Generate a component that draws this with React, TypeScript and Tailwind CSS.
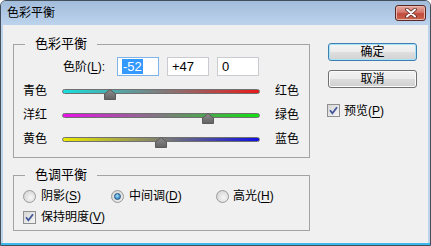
import type { ReactNode } from "react";

const font = "font-['Liberation_Sans','Noto_Sans_CJK_SC',sans-serif]";

function Key({ children }: { children: ReactNode }) {
  return <span className="underline underline-offset-[2px]">{children}</span>;
}

function CheckBox() {
  return (
    <span className="flex justify-center items-center border border-[#8e8f8f] bg-[linear-gradient(135deg,#d6d6d6,#f6f6f6)] w-[13px] h-[13px] shrink-0">
      <svg width="9" height="9" viewBox="0 0 9 9">
        <path d="M1 4.3 L3.4 7.2 L8 1.2" fill="none" stroke="#41579a" strokeWidth="1.8" />
      </svg>
    </span>
  );
}

function Radio({ on }: { on?: boolean }) {
  return (
    <span className="flex justify-center items-center border border-[#9a9a9a] rounded-full bg-[radial-gradient(circle_at_60%_60%,#f6f6f6,#cdcdcd)] w-[13px] h-[13px] shrink-0">
      {on && (
        <span className="border border-[#1d4f7c] rounded-full bg-[radial-gradient(circle_at_40%_35%,#9bdcfb,#1b6db2)] w-[7px] h-[7px]" />
      )}
    </span>
  );
}

function Slider({ left, right, grad, value }: { left: string; right: string; grad: string; value: number }) {
  return (
    <div className="flex items-center pl-[9px] h-[24px]">
      <span className="w-[39px]">{left}</span>
      <div className="relative w-[198px] h-[5px]">
        <div className={`border border-[#707070] rounded-full w-full h-full ${grad}`} />
        {/* thumb */}
        <svg
          className="top-0 absolute"
          style={{ left: `calc(${(value + 100) / 2}% - 6px)` }}
          width="12"
          height="11"
          viewBox="0 0 12 11"
        >
          <defs>
            <linearGradient id={`g${left}`} x1="0" y1="0" x2="0" y2="1">
              <stop offset="0" stopColor="#8d8d8d" />
              <stop offset="1" stopColor="#626262" />
            </linearGradient>
          </defs>
          <path d="M6 0.5 L11.5 5 V10.5 H0.5 V5 Z" fill={`url(#g${left})`} stroke="#5b5b5b" />
        </svg>
      </div>
      <span className="ml-[15px]">{right}</span>
    </div>
  );
}

function NumBox({ value, active }: { value: string; active?: boolean }) {
  return (
    <div
      className={`flex items-center bg-white border pl-[4px] w-[42px] h-[19px] text-[13px] ${
        active ? "border-[#7eb4ea]" : "border-[#c9cbd0]"
      }`}
    >
      {active ? <span className="bg-[#3399ff] px-[1px] text-white leading-[15px]">{value}</span> : value}
    </div>
  );
}

export default function App() {
  return (
    <div className={`bg-white w-[431px] h-[246px] text-[12px] text-black ${font}`}>
      <div className="flex flex-col bg-[#bcd3ea] border border-[#434e5b] rounded-t-[6px] w-[431px] h-[246px] overflow-hidden">
        {/* title bar */}
        <div className="flex items-center bg-[linear-gradient(#a2bcdb,#bcd3ec)] pr-[4px] pl-[6px] h-[24px] shrink-0">
          <span className="leading-none">色彩平衡</span>
          <div className="flex justify-center items-center bg-[linear-gradient(#e6aa9f,#d5776b_45%,#c24a3c_55%,#c9664f)] shadow-[inset_0_0_0_1px_#eab7ae] ml-auto border border-[#5a2823] rounded-[3px] w-[31px] h-[16px]">
            <svg width="12" height="10" viewBox="0 0 12 10">
              <path d="M2 1.5 L10 8.5 M10 1.5 L2 8.5" stroke="#5a2b27" strokeWidth="3.6" strokeLinecap="round" />
              <path d="M2 1.5 L10 8.5 M10 1.5 L2 8.5" stroke="#ffffff" strokeWidth="2" strokeLinecap="round" />
            </svg>
          </div>
        </div>

        {/* client area */}
        <div className="flex flex-1 px-[2px]">
          <div className="flex flex-1 bg-[#f0f0f0] pl-[10px]">
            {/* left column */}
            <div className="flex flex-col w-[297px]">
              <fieldset className="mt-[11px] border border-[#a3a3a3] h-[122px]">
                <legend className="ml-[11px] px-[10px] text-[13px] leading-[16px]">色彩平衡</legend>
                <div className="flex items-center mt-[5px] pl-[49px]">
                  <span className="w-[54px]">
                    色阶(<Key>L</Key>):
                  </span>
                  <div className="flex gap-[8px]">
                    <NumBox value="-52" active />
                    <NumBox value="+47" />
                    <NumBox value="0" />
                  </div>
                </div>
                <div className="mt-[3px]">
                  <Slider left="青色" right="红色" value={-52} grad="bg-[linear-gradient(to_right,#18dede,#e81a1a)]" />
                  <Slider left="洋红" right="绿色" value={47} grad="bg-[linear-gradient(to_right,#e812e8,#12e012)]" />
                  <Slider left="黄色" right="蓝色" value={0} grad="bg-[linear-gradient(to_right,#eaea00,#1010e2)]" />
                </div>
              </fieldset>

              <fieldset className="mt-[9px] border border-[#a3a3a3] h-[64px]">
                <legend className="ml-[11px] px-[10px] text-[13px] leading-[16px]">色调平衡</legend>
                <div className="flex items-center mt-[3px] pl-[9px] h-[20px]">
                  <label className="flex items-center gap-[5px] w-[88px]">
                    <Radio />
                    <span>
                      阴影(<Key>S</Key>)
                    </span>
                  </label>
                  <label className="flex items-center gap-[5px] w-[105px]">
                    <Radio on />
                    <span>
                      中间调(<Key>D</Key>)
                    </span>
                  </label>
                  <label className="flex items-center gap-[4px]">
                    <Radio />
                    <span>
                      高光(<Key>H</Key>)
                    </span>
                  </label>
                </div>
                <label className="flex items-center gap-[5px] mt-[1px] pl-[9px] h-[20px]">
                  <CheckBox />
                  <span>
                    保持明度(<Key>V</Key>)
                  </span>
                </label>
              </fieldset>
            </div>

            {/* right column */}
            <div className="flex flex-col ml-[18px] pt-[18px] w-[89px]">
              <button className="bg-[linear-gradient(#f4f4f4,#ececec_50%,#dfdfdf_50%,#d2d2d2)] shadow-[inset_0_0_0_1px_#a8e3fa] border border-[#3c7fb1] rounded-[3px] h-[18px] leading-none">
                确定
              </button>
              <button className="bg-[linear-gradient(#f2f2f2,#ebebeb_50%,#dddddd_50%,#cfcfcf)] shadow-[inset_0_0_0_1px_#fbfbfb] mt-[9px] border border-[#707070] rounded-[3px] h-[18px] leading-none">
                取消
              </button>
              <label className="flex items-center gap-[4px] -ml-[1px] mt-[16px] h-[13px]">
                <CheckBox />
                <span>
                  预览(<Key>P</Key>)
                </span>
              </label>
            </div>
          </div>
        </div>

        <div className="bg-[#3cb8ec] h-[2px] shrink-0" />
      </div>
    </div>
  );
}
